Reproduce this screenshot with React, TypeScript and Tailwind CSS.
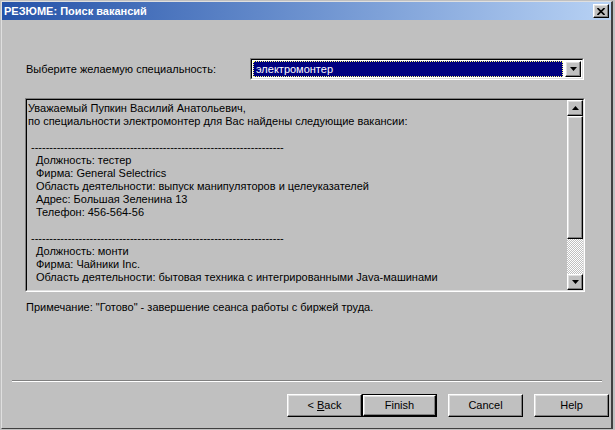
import React from "react";

const raised =
  "border border-t-white border-l-white border-r-black border-b-black shadow-[inset_-1px_-1px_#808080,inset_1px_1px_#dfdfdf]";

function Arrow({ up }: { up?: boolean }) {
  return (
    <svg width="7" height="4" viewBox="0 0 7 4" className="block">
      {up ? (
        <polygon points="3.5,0 7,4 0,4" fill="#000" />
      ) : (
        <polygon points="0,0 7,0 3.5,4" fill="#000" />
      )}
    </svg>
  );
}

function Btn({ children, def }: { children: React.ReactNode; def?: boolean }) {
  if (def) {
    return (
      <div className="w-[75px] h-[23px] border border-black flex">
        <div className={`flex-1 ${raised} flex items-center justify-center text-[11px]`}>{children}</div>
      </div>
    );
  }
  return (
    <div className={`w-[75px] h-[23px] ${raised} flex items-center justify-center text-[11px]`}>{children}</div>
  );
}

const dashes = "-".repeat(69);

function Dash() {
  return (
    <div className="h-[13px] pl-[3px] whitespace-nowrap">{dashes}</div>
  );
}

function L({ children, ind }: { children?: React.ReactNode; ind?: boolean }) {
  return <div className={`h-[13px] whitespace-nowrap ${ind ? "pl-[8px]" : ""}`}>{children}</div>;
}

export default function App() {
  return (
    <div className="w-[615px] h-[430px] bg-[#c0c0c0] overflow-hidden font-['Liberation_Sans',Arial,sans-serif] text-black text-[11px] leading-[13px]">
      <div className="ml-px mt-px w-[612px] h-[428px] border-l border-t border-l-[#dfdfdf] border-t-[#dfdfdf] border-r-2 border-b border-r-[#404040] border-b-[#404040] flex flex-col">
        {/* title bar */}
        <div className="h-[18px] bg-gradient-to-r from-[#2552a8] to-[#b8d2f4] flex items-center justify-between pl-[2px] pr-[2px]">
          <span className="text-white font-bold text-[11px] leading-[14px]">РЕЗЮМЕ: Поиск вакансий</span>
          <div className={`w-[16px] h-[14px] bg-[#c0c0c0] ${raised} flex items-center justify-center`}>
            <svg width="8" height="7" viewBox="0 0 8 7">
              <path d="M0.5 0 L7.5 7 M7.5 0 L0.5 7" stroke="#000" strokeWidth="1.6" />
            </svg>
          </div>
        </div>

        {/* select row */}
        <div className="mt-[38px] h-[22px] flex items-center">
          <div className="w-[248px] pl-[24px]">Выберите желаемую специальность:</div>
          <div className="w-[334px] h-[22px] border border-t-[#808080] border-l-[#808080] border-r-white border-b-white">
            <div className="h-full w-full border border-t-black border-l-black border-r-[#dfdfdf] border-b-[#dfdfdf] bg-white flex items-center pl-px pr-px">
              <div className="flex-1 h-[16px] bg-[#000080] border border-dotted border-[#ffff80] text-white flex items-center pl-[2px]">
                электромонтер
              </div>
              <div className={`w-[16px] h-[16px] ml-[2px] bg-[#c0c0c0] ${raised} flex items-center justify-center`}>
                <Arrow />
              </div>
            </div>
          </div>
        </div>

        {/* text area */}
        <div className="mt-[18px] ml-[23px] w-[560px] h-[194px] border border-t-[#808080] border-l-[#808080] border-r-white border-b-white">
          <div className="h-full w-full border border-t-black border-l-black border-r-[#dfdfdf] border-b-[#dfdfdf] flex">
            <div className="flex-1 pt-[2px] pl-px overflow-hidden">
              <L>Уважаемый Пупкин Василий Анатольевич,</L>
              <L>по специальности электромонтер для Вас найдены следующие вакансии:</L>
              <L />
              <Dash />
              <L ind>Должность: тестер</L>
              <L ind>Фирма: General Selectrics</L>
              <L ind>Область деятельности: выпуск манипуляторов и целеуказателей</L>
              <L ind>Адрес: Большая Зеленина 13</L>
              <L ind>Телефон: 456-564-56</L>
              <L />
              <Dash />
              <L ind>Должность: монти</L>
              <L ind>Фирма: Чайники Inc.</L>
              <L ind>Область деятельности: бытовая техника с интегрированными Java-машинами</L>
            </div>
            <div className="w-[16px] flex flex-col">
              <div className={`h-[16px] bg-[#c0c0c0] ${raised} flex items-center justify-center`}>
                <Arrow up />
              </div>
              <div className={`h-[123px] bg-[#c0c0c0] ${raised}`} />
              <div className="flex-1 bg-[image:repeating-conic-gradient(#c0c0c0_0_25%,#ffffff_0_50%)] bg-[length:2px_2px]" />
              <div className={`h-[16px] bg-[#c0c0c0] ${raised} flex items-center justify-center`}>
                <Arrow />
              </div>
            </div>
          </div>
        </div>

        {/* note */}
        <div className="mt-[9px] pl-[24px]">Примечание: "Готово" - завершение сеанса работы с биржей труда.</div>

        {/* separator */}
        <div className="mt-[66px] ml-[10px] w-[590px] border-t border-t-[#808080] border-b border-b-white" />

        {/* buttons */}
        <div className="mt-[12px] flex justify-end pr-[2px]">
          <Btn>
            &lt;&nbsp;<span className="underline">B</span>ack
          </Btn>
          <Btn def>Finish</Btn>
          <div className="w-[11px]" />
          <Btn>Cancel</Btn>
          <div className="w-[11px]" />
          <Btn>Help</Btn>
        </div>
      </div>
    </div>
  );
}
